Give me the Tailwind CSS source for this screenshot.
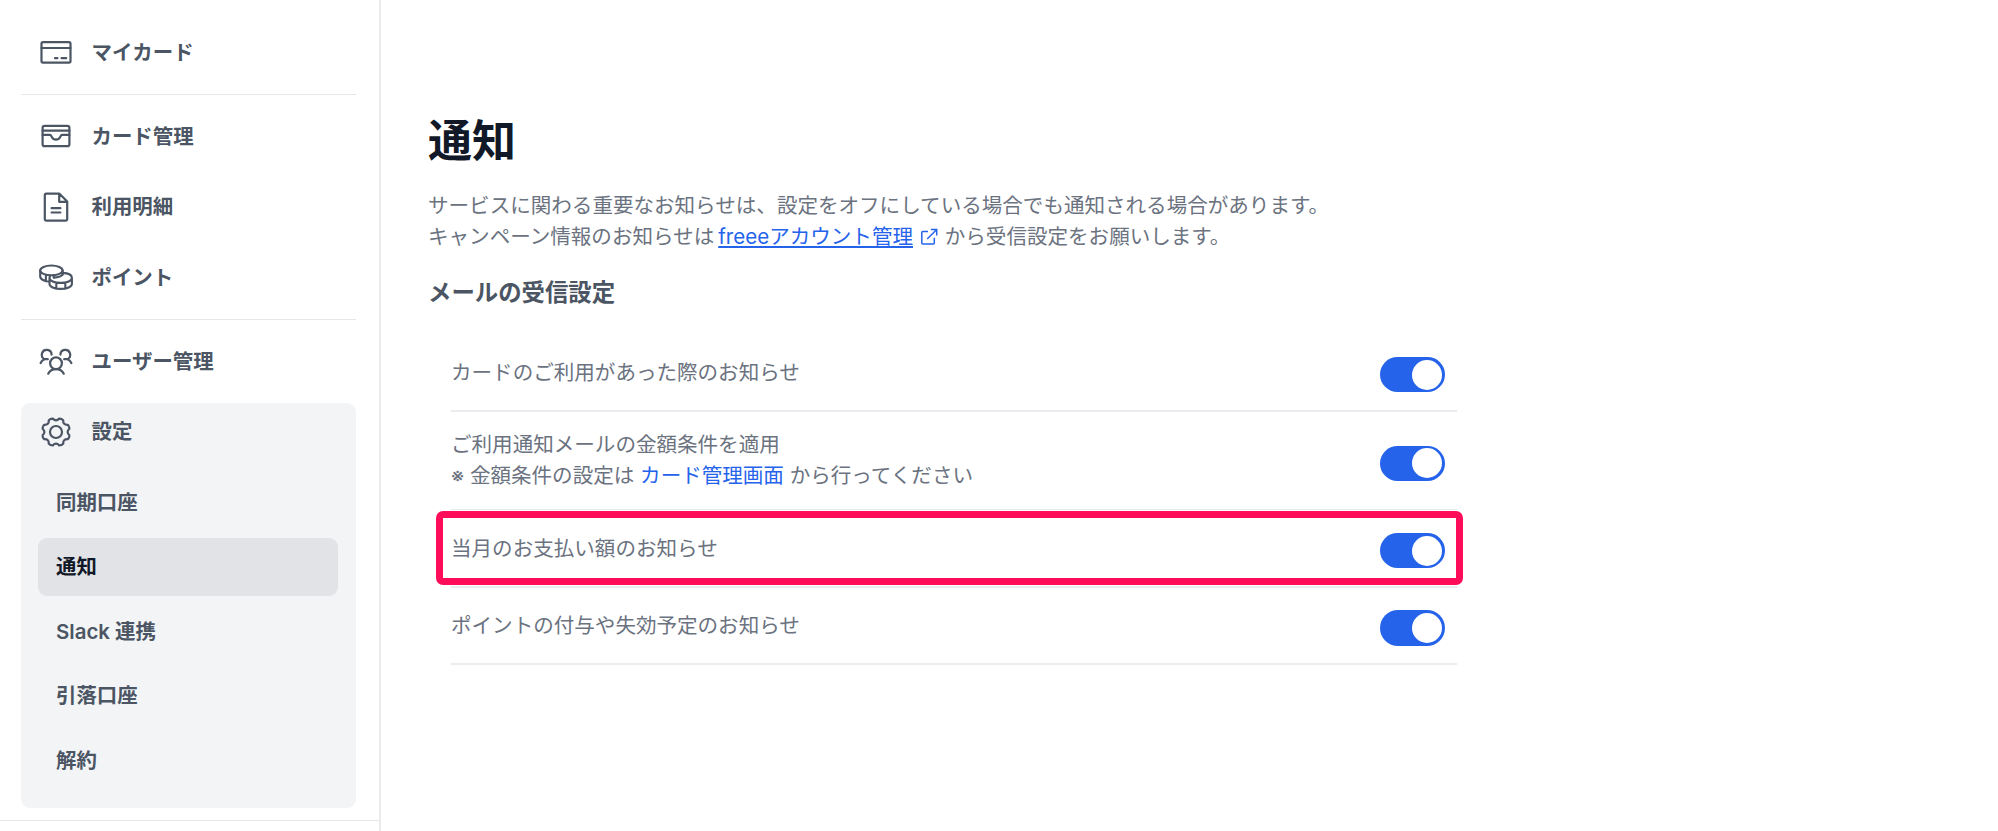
<!DOCTYPE html>
<html lang="ja">
<head>
    <meta charset="UTF-8"/>
    <meta name="viewport" content="width=device-width, initial-scale=1.0"/>
    <title>通知</title>
    <script src="https://cdn.jsdelivr.net/npm/@tailwindcss/browser@4"></script>
</head>
<body class="bg-white font-['Inter','Noto_Sans_CJK_JP',sans-serif] text-[20.55px] text-[#6b7280]">
<div class="flex h-[831px] overflow-hidden">
    <!-- Sidebar -->
    <aside class="w-[381px] shrink-0 border-r-2 border-[#ebebee] flex flex-col text-[20.45px] font-semibold text-[#4b5563]">
        <nav class="h-[821px] shrink-0 pt-[23px] pl-[20.5px] pr-[23.5px] border-b border-[#e5e7eb]">
            <a class="flex items-center h-[58.6px] pl-[17.5px] gap-[17.5px]">
                <svg class="size-9" viewBox="0 0 36 36" fill="none" stroke="currentColor" stroke-width="2.2" stroke-linecap="round" stroke-linejoin="round">
                    <rect x="3.5" y="8.2" width="29" height="20.4" rx="1.5"/>
                    <path d="M3.5 14h29M17 24.2h2.4M23.6 24.2h4.6"/>
                </svg>
                <span class="pt-[2px]">マイカード</span>
            </a>
            <hr class="mt-[12px] mb-[12.3px] border-[#e5e7eb]"/>
            <a class="flex items-center h-[58.6px] pl-[17.5px] gap-[17.5px]">
                <svg class="size-9" viewBox="0 0 36 36" fill="none" stroke="currentColor" stroke-width="2.2" stroke-linecap="round" stroke-linejoin="round">
                    <rect x="4.6" y="7.8" width="26.8" height="20.4" rx="2"/>
                    <path d="M4.6 12.7h26.8M4.6 16.8h7.2c1.2 0 1.4.8 1.8 1.8.7 1.8 2.3 3 4.4 3s3.7-1.2 4.4-3c.4-1 .6-1.8 1.8-1.8h7.2"/>
                </svg>
                <span class="pt-[2px]">カード管理</span>
            </a>
            <a class="mt-[12px] flex items-center h-[58.6px] pl-[17.5px] gap-[17.5px]">
                <svg class="size-9" viewBox="0 0 36 36" fill="none" stroke="currentColor" stroke-width="2.2" stroke-linecap="round" stroke-linejoin="round">
                    <path d="M8.3 4.7H21.5L29.2 12.5V30.2a1.5 1.5 0 0 1-1.5 1.5H8.3a1.5 1.5 0 0 1-1.5-1.5V6.2a1.5 1.5 0 0 1 1.5-1.5zM21.2 4.9V12.8H29M13.6 19.2h8.8M13.6 23.5h8.8"/>
                </svg>
                <span class="pt-[1px]">利用明細</span>
            </a>
            <a class="mt-[12px] flex items-center h-[58.6px] pl-[17.5px] gap-[17.5px]">
                <svg class="size-9" viewBox="0 0 36 36" fill="none" stroke="currentColor" stroke-width="2.1" stroke-linecap="round" stroke-linejoin="round">
                    <ellipse cx="13.4" cy="11.4" rx="11.2" ry="4.9"/>
                    <path d="M2.2 11.4v6.2c0 2.7 4.3 4.8 9.2 4.9M24.6 11.4v4.2M7.9 16v5.8M15.6 16.3v2.2"/>
                    <path d="M24.6 13.9c5.500.3 9.300 2.300 9.300 5 0 2.800-4.800 5-11.200 5s-11.200-2.200-11.200-5c0-.5.2-1 .5-1.400M11.500 18.900v6c0 2.800 4.800 5 11.200 5s11.200-2.200 11.200-5v-6M18.300 23.700v5.600M27.300 23.700v5.600M24.600 15.600c-1.300 1.600-4.700 2.600-8.600 3"/>
                </svg>
                <span class="pt-[2px]">ポイント</span>
            </a>
            <hr class="mt-[12px] mb-[12.3px] border-[#e5e7eb]"/>
            <a class="flex items-center h-[58.6px] pl-[17.5px] gap-[17.5px]">
                <svg class="size-9" viewBox="0 0 36 36" fill="none" stroke="currentColor" stroke-width="2.2" stroke-linecap="round" stroke-linejoin="round">
                    <circle cx="18" cy="20.3" r="5.9"/>
                    <path d="M10.2 30.7c1.5-3 4.3-4.6 7.8-4.6s6.3 1.6 7.8 4.6"/>
                    <path d="M13.6 11.6a4.9 4.9 0 1 0-7 4.6h3.2M6.6 16.2c-2 .6-3.3 1.8-4 3.9"/>
                    <path d="M22.4 11.6a4.9 4.9 0 1 1 7 4.6h-3.2M29.4 16.2c2 .6 3.3 1.8 4 3.9"/>
                </svg>
                <span class="pt-[2px]">ユーザー管理</span>
            </a>
            <!-- Settings group -->
            <div class="mt-[12px] h-[405px] rounded-[9px] bg-[#f3f4f6]">
                <a class="flex items-center h-[58.6px] pl-[17.5px] gap-[17.5px]">
                    <svg class="size-9" viewBox="-18 -18 36 36" fill="none" stroke="currentColor" stroke-width="2.2" stroke-linejoin="round">
                        <circle r="6"/>
                        <path d="M13.4 3.2Q13.5 5.6 11.8 7.2Q6.9 6.9 7.2 11.8Q5.6 13.5 3.2 13.4Q0 9.8-3.2 13.4Q-5.6 13.5-7.2 11.8Q-6.9 6.9-11.8 7.2Q-13.5 5.6-13.4 3.2Q-9.8 0-13.4-3.2Q-13.5-5.6-11.8-7.2Q-6.9-6.9-7.2-11.8Q-5.6-13.5-3.2-13.4Q0-9.8 3.2-13.4Q5.6-13.5 7.2-11.8Q6.9-6.9 11.8-7.2Q13.5-5.6 13.4-3.2Q9.8 0 13.4 3.2z"/>
                    </svg>
                    <span class="pt-[1px]">設定</span>
                </a>
                <div class="mt-[12px] mx-[17.5px] flex flex-col gap-[6px]">
                    <a class="flex items-center h-[58.6px] pl-[18px] pt-[1px]">同期口座</a>
                    <a class="flex items-center h-[58.6px] pl-[18px] pt-[1px] rounded-[9px] bg-[#e2e3e7] text-[#111827]">通知</a>
                    <a class="flex items-center h-[58.6px] pl-[18px] pt-[1px]">Slack 連携</a>
                    <a class="flex items-center h-[58.6px] pl-[18px] pt-[1px]">引落口座</a>
                    <a class="flex items-center h-[58.6px] pl-[18px] pt-[1px]">解約</a>
                </div>
            </div>
        </nav>
    </aside>

    <!-- Main Content -->
    <main class="w-[1076px] pl-[47px] pt-[109px]">
        <h1 class="text-[44px] leading-[64px] font-semibold text-[#111827]">通知</h1>
        <p class="mt-[17px] leading-[31px]">
            サービスに関わる重要なお知らせは、設定をオフにしている場合でも通知される場合があります。<br/>
            キャンペーン情報のお知らせは<a class="ml-[4px] text-[#2563eb] underline">freeeアカウント管理</a><svg class="inline-block size-[18px] ml-[7px] mr-px align-[-2px] text-[#2563eb]" viewBox="0 0 18 18" fill="none" stroke="currentColor" stroke-width="1.5">
                <path d="M8 3.5H2.8a1 1 0 0 0-1 1V15a1 1 0 0 0 1 1H13.3a1 1 0 0 0 1-1V9.8M10.8 1.5H16.7V7.4M16.5 1.7 7.2 11"/>
            </svg>
            から受信設定をお願いします。
        </p>
        <h2 class="mt-[25px] text-[23.4px] leading-[32px] font-semibold text-[#4b5563]">メールの受信設定</h2>

        <div class="mt-[25px] ml-[23px] leading-[31px]">
            <div class="flex items-center justify-between h-[77.5px] pr-[12px] border-b-2 border-[#ebecf0]">
                <span class="pt-[2px]">カードのご利用があった際のお知らせ</span>
                <div class="mt-[6px] flex justify-end w-[65px] h-[35.4px] p-[2.7px] rounded-full bg-[#2563eb]"><div class="size-[30px] rounded-full bg-white"></div></div>
            </div>
            <div class="flex items-center justify-between h-[98.5px] pr-[12px] border-b border-[#e5e7eb]">
                <span>ご利用通知メールの金額条件を適用<br/>※ 金額条件の設定は <a class="text-[#2563eb]">カード管理画面</a> から行ってください</span>
                <div class="mt-[6px] flex justify-end w-[65px] h-[35.4px] p-[2.7px] rounded-full bg-[#2563eb]"><div class="size-[30px] rounded-full bg-white"></div></div>
            </div>
            <div class="relative flex items-center justify-between h-[77.5px] pr-[12px] border-b-2 border-[#ebecf0]">
                <span class="pt-[2px]">当月のお支払い額のお知らせ</span>
                <div class="mt-[6px] flex justify-end w-[65px] h-[35.4px] p-[2.7px] rounded-full bg-[#2563eb]"><div class="size-[30px] rounded-full bg-white"></div></div>
                <!-- Highlight frame -->
                <div class="absolute -left-[15px] -right-[6px] top-[0.5px] h-[74px] rounded-[7px] border-[7px] border-[#ff0d5b]"></div>
            </div>
            <div class="flex items-center justify-between h-[77.3px] pr-[12px] border-b-2 border-[#ebecf0]">
                <span>ポイントの付与や失効予定のお知らせ</span>
                <div class="mt-[6px] flex justify-end w-[65px] h-[35.4px] p-[2.7px] rounded-full bg-[#2563eb]"><div class="size-[30px] rounded-full bg-white"></div></div>
            </div>
        </div>
    </main>
</div>
</body>
</html>
